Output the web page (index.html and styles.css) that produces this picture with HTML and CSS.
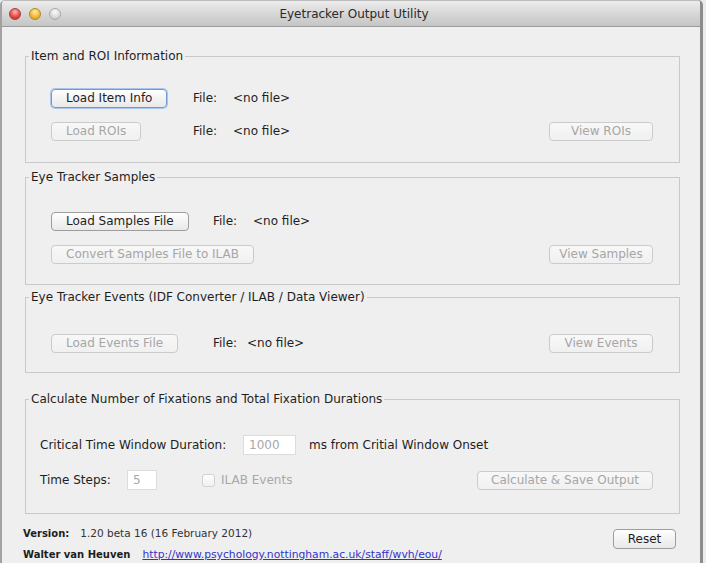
FILE: index.html
```html
<!DOCTYPE html>
<html lang="en">
<head>
    <meta charset="UTF-8">
    <title>Eyetracker Output Utility</title>
    <link rel="stylesheet" href="styles.css">
</head>
<body>
<div class="window">
    <!-- Title bar -->
    <div class="titlebar">
        <div class="lights">
            <span class="light red"></span>
            <span class="light yellow"></span>
            <span class="light grey"></span>
        </div>
        <div class="title">Eyetracker Output Utility</div>
        <div></div>
    </div>

    <div class="content">
        <fieldset class="group">
            <legend>Item and ROI Information</legend>
            <div class="group-body body-items">
                <div class="row">
                    <div class="cell cell-items"><button class="btn focused">Load Item Info</button></div>
                    <span class="file-label">File:</span>
                    <span class="file-name">&lt;no file&gt;</span>
                </div>
                <div class="row">
                    <div class="cell cell-items"><button class="btn" disabled>Load ROIs</button></div>
                    <span class="file-label">File:</span>
                    <span class="file-name">&lt;no file&gt;</span>
                    <button class="btn btn-view" disabled>View ROIs</button>
                </div>
            </div>
        </fieldset>

        <fieldset class="group group-samples">
            <legend>Eye Tracker Samples</legend>
            <div class="group-body body-samples">
                <div class="row">
                    <div class="cell cell-wide"><button class="btn">Load Samples File</button></div>
                    <span class="file-label">File:</span>
                    <span class="file-name">&lt;no file&gt;</span>
                </div>
                <div class="row">
                    <button class="btn" disabled>Convert Samples File to ILAB</button>
                    <button class="btn btn-view" disabled>View Samples</button>
                </div>
            </div>
        </fieldset>

        <fieldset class="group">
            <legend>Eye Tracker Events (IDF Converter / ILAB / Data Viewer)</legend>
            <div class="group-body body-events">
                <div class="row">
                    <div class="cell cell-wide"><button class="btn" disabled>Load Events File</button></div>
                    <span class="file-label short">File:</span>
                    <span class="file-name">&lt;no file&gt;</span>
                    <button class="btn btn-view" disabled>View Events</button>
                </div>
            </div>
        </fieldset>

        <fieldset class="group group-calc">
            <legend>Calculate Number of Fixations and Total Fixation Durations</legend>
            <div class="group-body body-calc">
                <div class="row">
                    <span class="calc-label">Critical Time Window Duration:</span>
                    <input class="field field-ms" type="text" value="1000" disabled>
                    <span class="ms-text">ms from Critial Window Onset</span>
                </div>
                <div class="row">
                    <span class="calc-label steps">Time Steps:</span>
                    <input class="field field-steps" type="text" value="5" disabled>
                    <label class="check"><span class="box"></span>ILAB Events</label>
                    <button class="btn btn-calc" disabled>Calculate &amp; Save Output</button>
                </div>
            </div>
        </fieldset>

        <div class="footer">
            <div class="about">
                <div><b>Version:</b><span class="version">1.20 beta 16 (16 February 2012)</span></div>
                <div class="author"><b>Walter van Heuven</b><a href="#">http://www.psychology.nottingham.ac.uk/staff/wvh/eou/</a></div>
            </div>
            <button class="btn btn-reset">Reset</button>
        </div>
    </div>
</div>
</body>
</html>
```

FILE: styles.css
```css
body {
    margin: 0;
    background-color: #ececec;
    font-family: "DejaVu Sans", sans-serif;
    font-size: 12px;
    color: #1e1e1e;
}

/* Window frame */
.window {
    width: 703px;
    height: 563px;
    box-sizing: border-box;
    border-left: 2px solid #a2a2a2;
    border-right: 3px solid #8c8c8c;
    border-radius: 5px 5px 0 0;
    background-color: #efefef;
    overflow: hidden;
}

.titlebar {
    display: grid;
    grid-template-columns: 1fr auto 1fr;
    align-items: center;
    height: 27px;
    box-sizing: border-box;
    border-top: 1px solid #bdbdbd;
    border-bottom: 1px solid #9c9c9c;
    background: linear-gradient(#ececec, #d3d3d3 60%, #c6c6c6);
}

.lights {
    display: flex;
    gap: 8px;
    padding-left: 7px;
}

.light {
    width: 12px;
    height: 12px;
    border-radius: 50%;
    box-sizing: border-box;
}

.light.red {
    background: radial-gradient(circle at 50% 30%, #ffb3b0, #e2463f 60%, #b72a24);
    border: 1px solid #a8403c;
}

.light.yellow {
    background: radial-gradient(circle at 50% 30%, #ffe9a8, #f1b62c 60%, #c78e16);
    border: 1px solid #ad8a2c;
}

.light.grey {
    background: radial-gradient(circle at 50% 30%, #fbfbfb, #d9d9d9 60%, #bcbcbc);
    border: 1px solid #a9a9a9;
}

.title {
    font-size: 12px;
    color: #2a2a2a;
    padding-left: 6px;
}

.content {
    padding: 21px 20px 0 23px;
}

/* Group boxes */
.group {
    margin: 0 0 4px 0;
    padding: 0 0 0 3px;
    border: 1px solid #c9c9c9;
    min-inline-size: 0;
}

.group legend {
    padding: 0 2px;
    line-height: 16px;
    font-size: 12px;
}

.group-samples {
    margin-top: 6px;
}

.group-calc {
    margin-top: 18px;
}

.group-body {
    display: flex;
    flex-direction: column;
    gap: 13px;
    padding: 0 26px 0 22px;
}

.body-items { padding-top: 24px; padding-bottom: 21px; }
.body-samples { padding-top: 26px; padding-bottom: 20px; }
.body-events { padding-top: 28px; padding-bottom: 19px; }
.body-calc { padding: 28px 26px 23px 11px; gap: 15px; }

.row {
    display: flex;
    align-items: center;
    height: 20px;
}

.cell-items { width: 142px; }
.cell-wide { width: 162px; }

.file-label { width: 40px; }
.file-label.short { width: 34px; }

/* Buttons */
.btn {
    height: 19px;
    padding: 0 14px;
    white-space: nowrap;
    font-family: "DejaVu Sans", sans-serif;
    font-size: 12px;
    color: #1e1e1e;
    background: linear-gradient(#ffffff, #f3f3f3 50%, #e9e9e9);
    border: 1px solid #9d9d9d;
    border-radius: 4px;
    box-sizing: border-box;
}

.btn.focused {
    border-color: #6f9ad6;
    box-shadow: 0 0 0 1px #a9c5ec;
}

.btn:disabled {
    color: #a6a6a6;
    background: linear-gradient(#f8f8f8, #f0f0f0);
    border-color: #cbcbcb;
}

.btn-view {
    margin-left: auto;
    width: 104px;
    padding: 0;
}

/* Calculation fields */
.calc-label { width: 203px; }
.calc-label.steps { width: 87px; }

.field {
    height: 20px;
    box-sizing: border-box;
    padding: 0 5px;
    font-family: "DejaVu Sans", sans-serif;
    font-size: 12px;
    color: #a8a8a8;
    background-color: #ffffff;
    border: 1px solid #dcdcdc;
}

.field-ms { width: 53px; }
.field-steps { width: 30px; }

.ms-text { margin-left: 13px; }

.check {
    display: flex;
    align-items: center;
    margin-left: 45px;
    color: #a8a8a8;
}

.check .box {
    width: 13px;
    height: 13px;
    margin-right: 6px;
    box-sizing: border-box;
    border: 1px solid #d2d2d2;
    border-radius: 3px;
    background: linear-gradient(#fdfdfd, #f1f1f1);
}

.btn-calc {
    margin-left: auto;
    width: 176px;
    padding: 0;
}

/* Footer */
.footer {
    display: flex;
    justify-content: space-between;
    align-items: flex-start;
    margin-left: -2px;
    padding: 7px 4px 0 0;
    font-size: 10.5px;
}

.about div {
    line-height: 16px;
}

.about b {
    font-size: 10px;
}

.author {
    margin-top: 4px;
}

.version {
    margin-left: 11px;
    color: #333;
}

.author a {
    margin-left: 12px;
    font-size: 10.75px;
    color: #3232c8;
}

.btn-reset {
    width: 63px;
    height: 20px;
    margin-top: 4px;
    padding: 0;
    font-size: 12px;
}
```
